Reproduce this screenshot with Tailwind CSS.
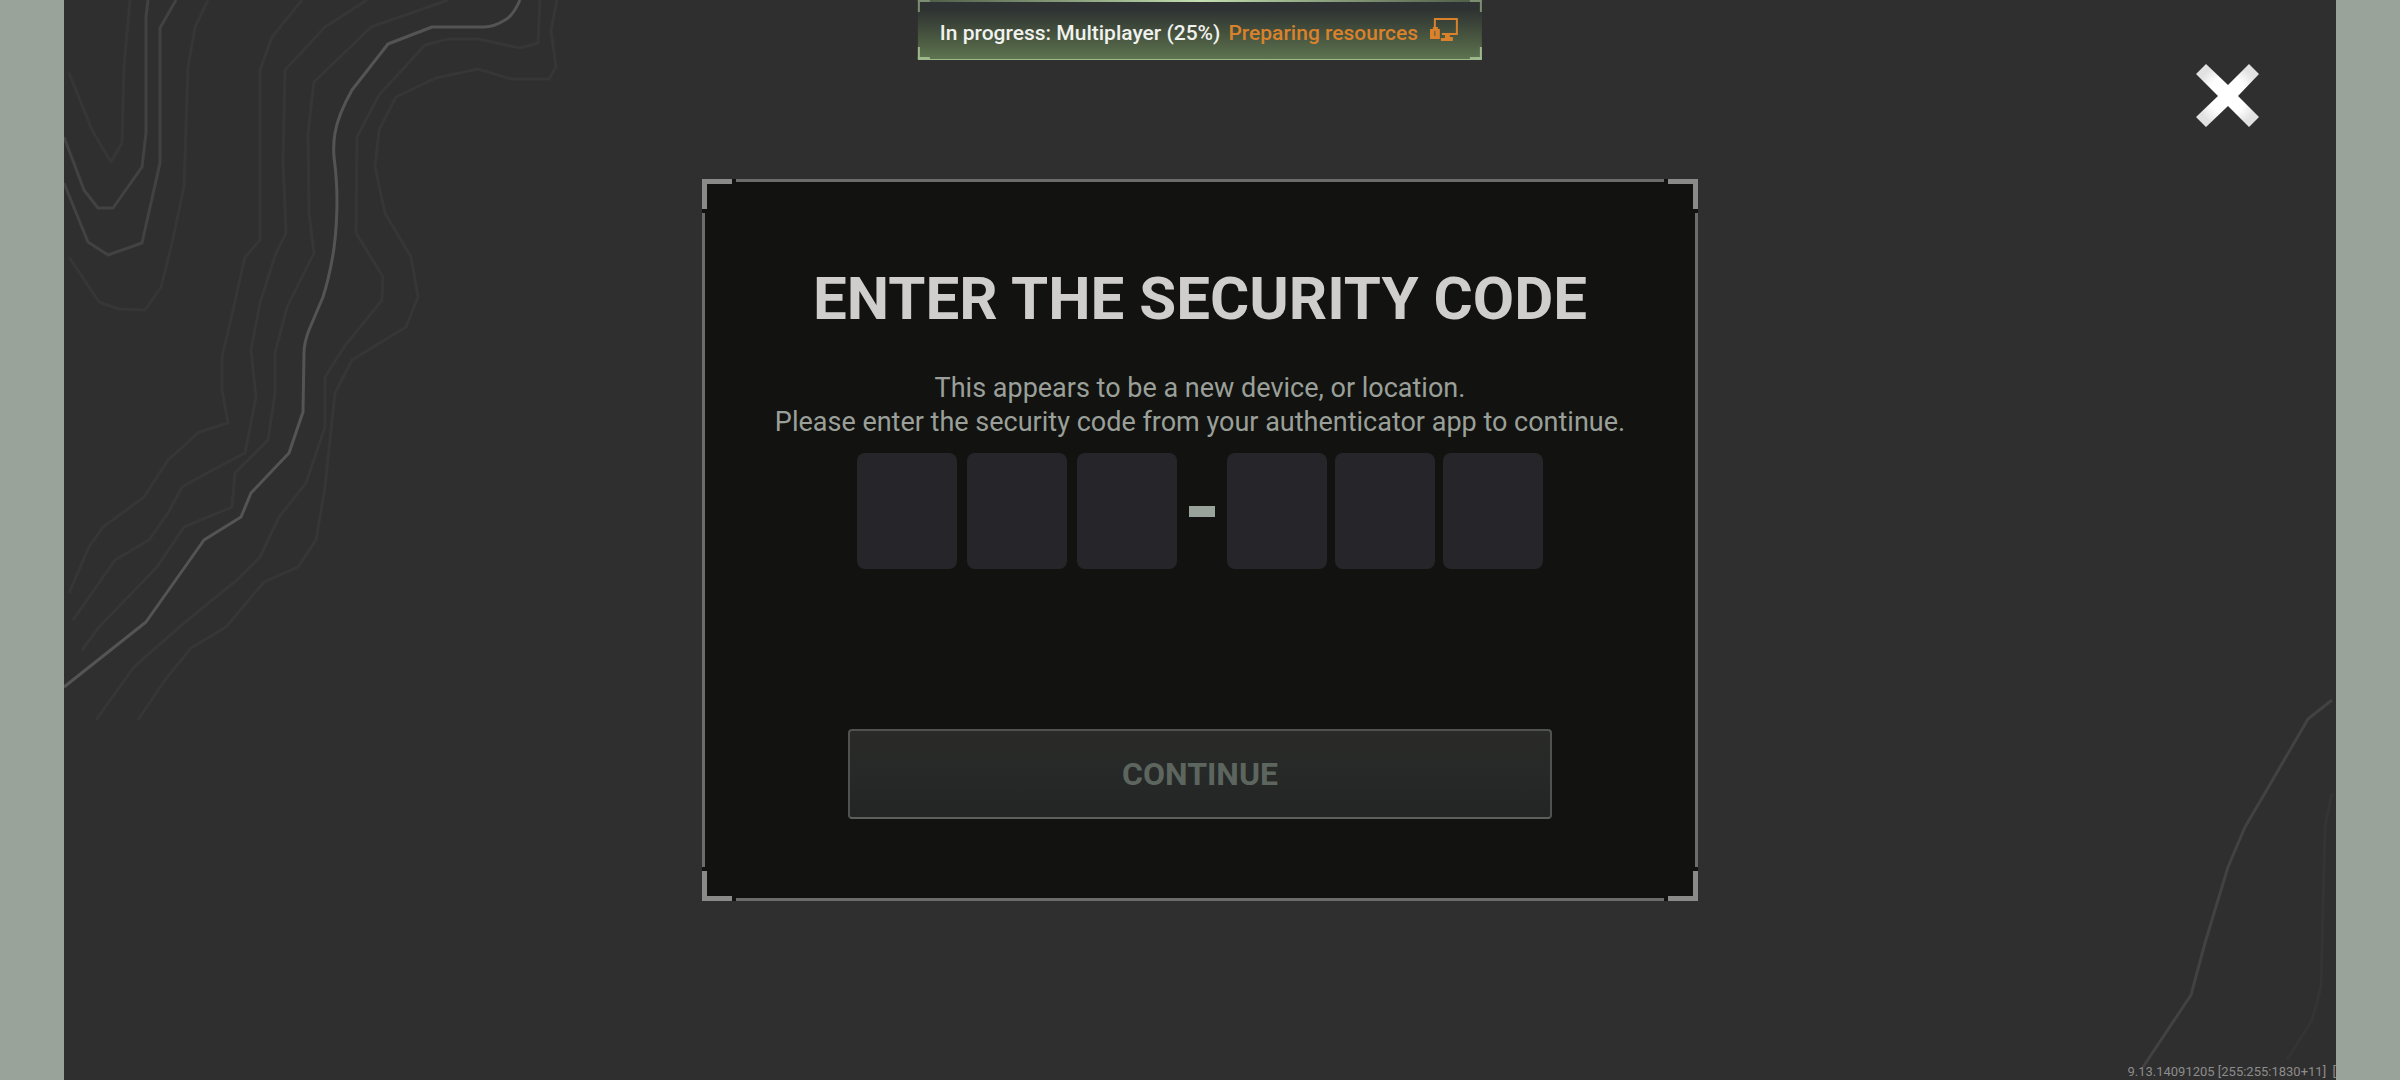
<!DOCTYPE html>
<html lang="en">
  <head>
    <meta charset="UTF-8" />
    <meta name="viewport" content="width=device-width, initial-scale=1.0" />
    <title>Enter the security code</title>
    <script src="https://cdn.jsdelivr.net/npm/@tailwindcss/browser@4"></script>
  </head>
  <body class="bg-[#9aa399] font-['Roboto',sans-serif]">
    <div class="relative min-h-screen bg-[#2f2f2f] mx-16 overflow-hidden grid place-items-center">
      <!-- Contour lines, top left -->
      <svg class="absolute left-0 top-0" width="520" height="730" viewBox="64 0 520 730" fill="none" stroke-width="3" stroke-linejoin="round" aria-hidden="true">
        <g stroke="#363636">
          <path d="M130 0L124 67L122 143L111 162L92 130L69 73" />
          <path d="M208 0L195 27L188 67L184 187L172 243L161 287L145 310L119 309L99 302L69 257" />
          <path d="M302 0L272 37L260 70V240L245 257L233 310L222 357V390L228 423L199 432L168 460L144 497L103 527L89 547L69 593" />
          <path d="M367 0L325 27L285 70L283 160L286 233L276 253L260 303L251 350L256 397L245 453L207 473L182 487L168 513L149 540L115 560L73 620" />
          <path d="M448 0L371 27L314 82L308 133L309 213L314 253L287 307L275 353V393L268 440L235 473L232 507L184 527L157 567L99 627L82 650" />
          <path d="M540 0L538 43L520 48L478 39H448L425 45L379 95L357 137L356 233L383 277L382 300L344 347L325 377V427L306 483L279 517L260 557L237 580L184 623L134 667L96 720" />
          <path d="M557 0L551 30L556 67L549 79H511L478 69L436 78L396 97L379 130L375 167L385 213L411 257L418 297L406 327L352 360L335 393L325 487L316 540L298 567L264 582L226 627L191 648L165 680L138 720" />
        </g>
        <g stroke="#424242">
          <path d="M64 137L84 190L98 208H113L142 167L146 133V17L148 0" />
          <path d="M64 183L88 242L108 255L142 243L160 163V28L176 0" />
        </g>
        <path stroke="#545454" d="M520 0Q513 16 505 20Q494 27 484 27H432L388 44L352 90Q338 115 335 133Q333 145 334 157Q337 180 337 200Q337 225 334 248Q330 275 323 297L309 330Q304 343 304 353L303 412L289 453L251 493L241 517L204 540L146 622L64 687" />
      </svg>

      <!-- Contour lines, bottom right -->
      <svg class="absolute right-0 bottom-0" width="236" height="400" viewBox="2100 680 236 400" fill="none" stroke-width="3" stroke-linejoin="round" aria-hidden="true">
        <path stroke="#424242" d="M2332 700L2308 719L2265 793L2245 827L2228 867L2205 943L2191 995L2143 1067" />
        <path stroke="#343434" d="M2332 793L2325 827L2321 987L2312 1020L2287 1060" />
      </svg>

      <!-- Download status -->
      <div role="status" class="absolute top-0 left-1/2 -translate-x-1/2 h-15 px-[22px] flex items-center gap-2 whitespace-nowrap text-[21px] font-medium border-b border-[#9cb98c] bg-linear-to-b from-[#2e3232] from-15% via-[#47543f] via-60% to-[#5d7450]">
        <span class="absolute inset-x-0 top-0 h-[2px] bg-linear-to-r from-[#4d5a46] via-[#c4e0b0] to-[#4d5a46]"></span>
        <span class="absolute left-0 top-0 w-3 h-3 border-l-2 border-t-2 border-[#7b8f70]"></span>
        <span class="absolute right-0 top-0 w-3 h-3 border-r-2 border-t-2 border-[#7b8f70]"></span>
        <span class="absolute left-0 bottom-0 w-3 h-3 border-l-2 border-b-2 border-[#9cb98c]"></span>
        <span class="absolute right-0 bottom-0 w-3 h-3 border-r-2 border-b-2 border-[#9cb98c]"></span>
        <span class="pt-2 text-[#f0f2ee]">In progress: Multiplayer (25%)</span>
        <span class="pt-2 text-[#d9822b]">Preparing resources</span>
        <svg class="ml-1" width="30" height="24" viewBox="0 0 30 24" fill="none" aria-hidden="true">
          <path d="M5 10V1H27V16H12" stroke="#d9822b" stroke-width="2" />
          <path d="M0 11H3V9H8V11H10V21H0Z M15 17H20V19H23V23H11V20H15Z" fill="#d9822b" />
          <path d="M5 13V18" stroke="#4b5a43" stroke-width="1" />
        </svg>
      </div>

      <button type="button" aria-label="Close" class="absolute top-16 right-19 text-white">
        <svg width="64" height="64" viewBox="0 0 64 64" aria-hidden="true">
          <defs>
            <radialGradient id="cross">
              <stop offset="0.6" stop-color="#ffffff" />
              <stop offset="1" stop-color="#e2e2e2" />
            </radialGradient>
          </defs>
          <path fill="url(#cross)" d="M10 0L32 21L53 0L63 10L42 32L63 53L53 63L32 42L10 63L0 53L22 32L0 10Z" />
        </svg>
      </button>

      <!-- Security code dialog -->
      <main role="dialog" aria-labelledby="dialog-title" class="relative w-full max-w-[996px] bg-[#121210] py-[82px] flex flex-col items-center text-center">
        <span class="absolute top-0 inset-x-[34px] h-[3px] bg-[#6c6c6a]"></span>
        <span class="absolute bottom-0 inset-x-[34px] h-[3px] bg-[#6c6c6a]"></span>
        <span class="absolute left-0 inset-y-[34px] w-[3px] bg-[#6c6c6a]"></span>
        <span class="absolute right-0 inset-y-[34px] w-[3px] bg-[#6c6c6a]"></span>
        <span class="absolute left-0 top-0 size-[30px] border-l-5 border-t-5 border-[#8a8a88]"></span>
        <span class="absolute right-0 top-0 size-[30px] border-r-5 border-t-5 border-[#8a8a88]"></span>
        <span class="absolute left-0 bottom-0 size-[30px] border-l-5 border-b-5 border-[#8a8a88]"></span>
        <span class="absolute right-0 bottom-0 size-[30px] border-r-5 border-b-5 border-[#8a8a88]"></span>

        <h1 id="dialog-title" class="text-[60px] leading-[76px] font-bold text-[#cfcecd]">ENTER THE SECURITY CODE</h1>
        <p class="mt-[34px] text-[27px] leading-[34px] text-[#9aa099]">
          This appears to be a new device, or location.<br />
          Please enter the security code from your authenticator app to continue.
        </p>

        <form class="w-full flex flex-col items-center">
          <fieldset class="mt-[14px] flex items-center gap-3">
            <div class="flex gap-[10px]">
              <input aria-label="Digit 1" inputmode="numeric" maxlength="1" class="w-25 h-29 rounded-lg bg-[#262529] text-center text-5xl text-[#cfcecd] outline-none" />
              <input aria-label="Digit 2" inputmode="numeric" maxlength="1" class="w-25 h-29 rounded-lg bg-[#262529] text-center text-5xl text-[#cfcecd] outline-none" />
              <input aria-label="Digit 3" inputmode="numeric" maxlength="1" class="w-25 h-29 rounded-lg bg-[#262529] text-center text-5xl text-[#cfcecd] outline-none" />
            </div>
            <span class="w-[26px] h-[11px] bg-[#9aa39b]"></span>
            <div class="flex gap-2">
              <input aria-label="Digit 4" inputmode="numeric" maxlength="1" class="w-25 h-29 rounded-lg bg-[#262529] text-center text-5xl text-[#cfcecd] outline-none" />
              <input aria-label="Digit 5" inputmode="numeric" maxlength="1" class="w-25 h-29 rounded-lg bg-[#262529] text-center text-5xl text-[#cfcecd] outline-none" />
              <input aria-label="Digit 6" inputmode="numeric" maxlength="1" class="w-25 h-29 rounded-lg bg-[#262529] text-center text-5xl text-[#cfcecd] outline-none" />
            </div>
          </fieldset>
          <button type="submit" class="mt-40 w-full max-w-[704px] h-[90px] rounded-sm border-2 border-[#50524f] border-b-[#5c5f5b] bg-linear-to-b from-[#2a2a28] via-[#262928] to-[#232524] text-[32px] font-bold text-[#5d665e]">CONTINUE</button>
        </form>
      </main>

      <p class="absolute right-0 bottom-0 text-[13px] leading-4 text-[#8c8c8c] whitespace-pre">9.13.14091205 [255:255:1830+11]  [</p>
    </div>
  </body>
</html>
